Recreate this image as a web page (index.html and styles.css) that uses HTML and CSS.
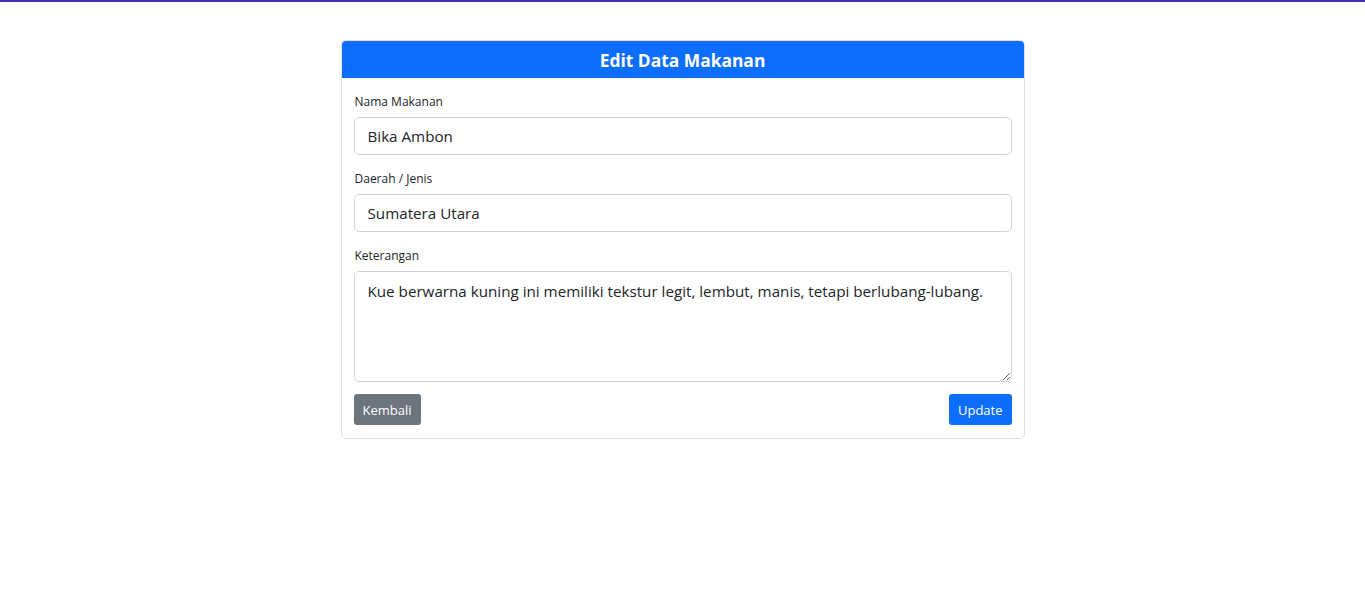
FILE: index.html
```html
<!DOCTYPE html>
<html lang="id">
<head>
<meta charset="utf-8">
<title>Edit Data Makanan</title>
<link rel="stylesheet" href="styles.css">
</head>
<body>
<div class="topbar"></div>
<main class="page">
  <form class="card">
    <div class="card-header">Edit Data Makanan</div>
    <div class="card-body">
      <div class="group">
        <label class="label">Nama Makanan</label>
        <input class="control" type="text" value="Bika Ambon">
      </div>
      <div class="group">
        <label class="label">Daerah / Jenis</label>
        <input class="control" type="text" value="Sumatera Utara">
      </div>
      <div class="group group-last">
        <label class="label">Keterangan</label>
        <textarea class="control area">Kue berwarna kuning ini memiliki tekstur legit, lembut, manis, tetapi berlubang-lubang.</textarea>
      </div>
      <div class="actions">
        <button type="button" class="btn btn-secondary">Kembali</button>
        <button type="button" class="btn btn-primary">Update</button>
      </div>
    </div>
  </form>
</main>
</body>
</html>
```

FILE: styles.css
```css
* { box-sizing: border-box; }
html, body { margin: 0; padding: 0; }
body {
  font-family: "Open Sans", "Noto Sans", sans-serif;
  color: #212529;
  background: #fff;
}
.topbar {
  height: 2px;
  background: #3f2fb4;
}
.page {
  display: flex;
  justify-content: center;
  padding-top: 38px;
}
.card {
  width: 684px;
  border: 1px solid #dcdfe3;
  border-radius: 5px;
  overflow: hidden;
  margin: 0;
}
.card-header {
  background: #0d6efd;
  color: #fff;
  font-weight: 700;
  font-size: 17.4px;
  height: 37px;
  line-height: 39px;
  text-align: center;
}
.card-body {
  padding: 14px 12px 13px 12px;
}
.group {
  display: flex;
  flex-direction: column;
  margin-bottom: 14px;
}
.group-last { margin-bottom: 12px; }
.label {
  font-size: 12px;
  line-height: 20px;
  margin-bottom: 5px;
  padding-left: 1px;
}
.control {
  font-family: inherit;
  font-size: 15.2px;
  color: #212529;
  height: 38px;
  padding: 6px 13px;
  border: 1px solid #ced4da;
  border-radius: 5px;
  background: #fff;
  outline: none;
}
.area {
  height: 111px;
  line-height: 22px;
  padding-top: 8px;
  resize: vertical;
}
.actions {
  display: flex;
  justify-content: space-between;
}
.btn {
  font-family: inherit;
  font-size: 13px;
  color: #fff;
  height: 31px;
  padding: 0 9px;
  border: none;
  border-radius: 3px;
}
.btn-secondary { background: #6c757d; }
.btn-primary { background: #0d6efd; }
```
